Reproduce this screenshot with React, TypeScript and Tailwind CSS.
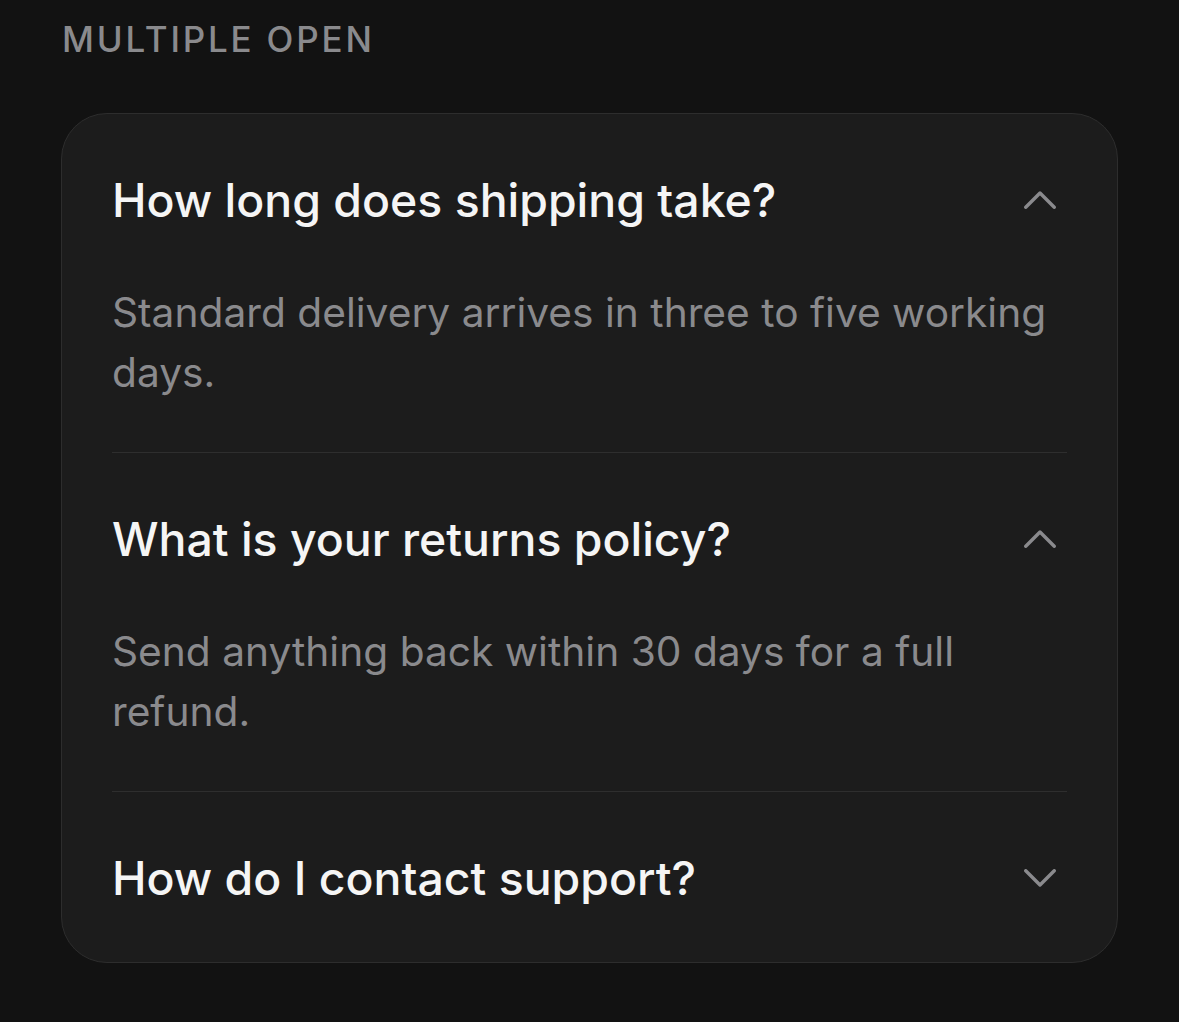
import { useState } from 'react'

const items = [
  { q: 'How long does shipping take?', a: 'Standard delivery arrives in three to five working days.' },
  { q: 'What is your returns policy?', a: 'Send anything back within 30 days for a full refund.' },
  { q: 'How do I contact support?', a: 'Write to us any time and we will reply within a day.' },
]

function Chevron({ open }: { open: boolean }) {
  return (
    <svg width="32" height="18" viewBox="0 0 32 18" fill="none" className="mr-[11px] shrink-0">
      <polyline
        points={open ? '1.75,16.25 16,2 30.25,16.25' : '1.75,1.75 16,16 30.25,1.75'}
        stroke="#8a8a8d"
        strokeWidth="3.4"
        strokeLinecap="round"
        strokeLinejoin="round"
      />
    </svg>
  )
}

export default function App() {
  const [open, setOpen] = useState<boolean[]>([true, true, false])

  const toggle = (i: number) => setOpen(prev => prev.map((v, j) => (j === i ? !v : v)))

  return (
    <div className="min-h-[1022px] w-full bg-[#121212] px-[61px] pt-[18px] font-['Inter','Noto_Sans',sans-serif]">
      <div className="text-[35px] leading-[42px] font-medium tracking-[0.08em] text-[#8a8a8d] pl-px">MULTIPLE OPEN</div>
      <div className="mt-[53px] rounded-[46px] border border-[#2d2d2d] bg-[#1c1c1c] px-[50px]">
        {items.map((it, i) => (
          <div key={i} className={i < items.length - 1 ? 'border-b border-[#2e2e2e]' : ''}>
            <button
              onClick={() => toggle(i)}
              className="flex w-full items-center justify-between pt-[58px] pb-[56px] text-left"
            >
              <span className="text-[46.4px] leading-[56px] font-medium text-[#f5f5f5]">{it.q}</span>
              <Chevron open={open[i]} />
            </button>
            {open[i] && (
              <p className="-mt-[1px] pb-[49px] pr-[10px] text-[40.7px] leading-[60px] text-[#8a8a8d]">{it.a}</p>
            )}
          </div>
        ))}
      </div>
    </div>
  )
}
